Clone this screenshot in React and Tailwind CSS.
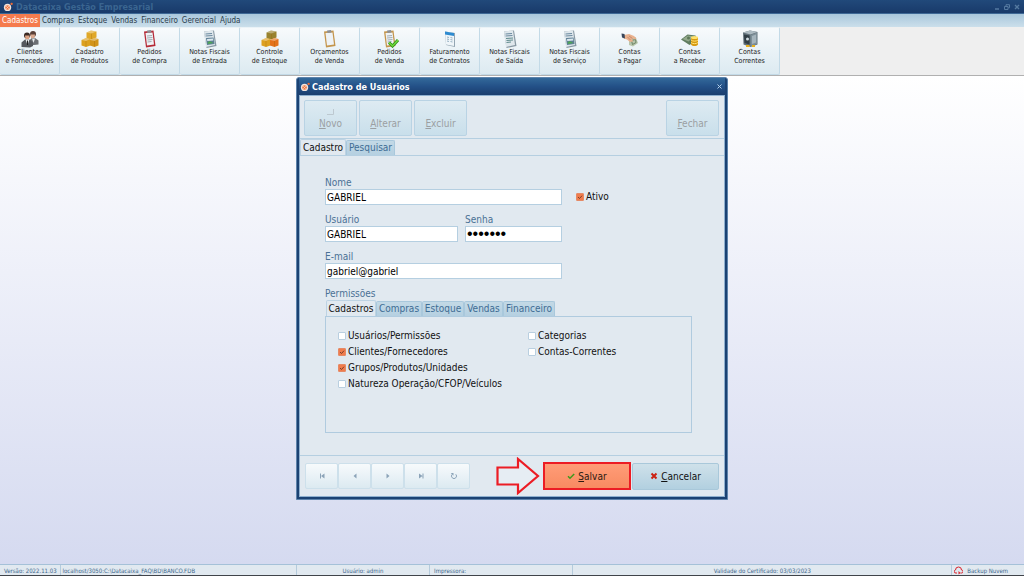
import React, { useState } from 'react';

const menus = ['Cadastros', 'Compras', 'Estoque', 'Vendas', 'Financeiro', 'Gerencial', 'Ajuda'];

const AppLogo = () => (
  <svg className="h-[10px] w-[10px] shrink-0" viewBox="0 0 22 22" aria-hidden="true">
    <circle cx="10" cy="12" r="8" fill="#f3e4dc" />
    <circle cx="10" cy="12" r="5" fill="#ee7541" />
    <path d="M7 9l6 6M13 9l-6 6" stroke="#fbd9c7" strokeWidth="1.6" />
    <circle cx="19" cy="4" r="2.6" fill="#ee6a35" />
  </svg>
);

const PeopleIcon = () => (
  <>
    <circle cx="24" cy="8" r="6" fill="#5a4038" />
    <path d="M19 9h9l-1 8h-7z" fill="#d9a98f" />
    <path d="M16 31V21l6-5h6l7 5v8z" fill="#6b6e73" />
    <path d="M22 17l3 9 3-9z" fill="#e6e9ec" />
    <circle cx="12" cy="11" r="6" fill="#3b2a24" />
    <path d="M8 11h9l-1 8H9z" fill="#dca283" />
    <path d="M1 34v-9l7-6h9l7 6v7l-6 3z" fill="#55585e" />
    <path d="M9 19l4 11 4-11z" fill="#eef1f4" />
    <path d="M13 21v9" stroke="#222" strokeWidth="2" />
  </>
);

const Boxes = ({ top, left, right }) => (
  <>
    <path d="M11 5l9-4 11 2v12l-10 4-10-2z" fill={top} />
    <path d="M11 5l9-4 11 2-10 4z" fill="#fff" fillOpacity=".35" />
    <path d="M1 20l9-4 9 2v13l-9 3-9-3z" fill={left} />
    <path d="M1 20l9-4 9 2-9 4z" fill="#fff" fillOpacity=".35" />
    <path d="M18 20l9-4 8 2v13l-8 3-9-3z" fill={right} />
    <path d="M18 20l9-4 8 2-8 4z" fill="#fff" fillOpacity=".35" />
    <path d="M21 7v11M10 22v11M27 22v11" stroke="#9a5e08" strokeOpacity=".6" />
  </>
);

const Clipboard = ({ color, lines, check }) => (
  <>
    <path d="M6 3l19-2 4 31-19 3z" fill={color} />
    <path d="M9 6l14-1 3 24-14 2z" fill="#eef2f5" />
    <path d="M12 1l8-1 1 5-8 1z" fill="#8b8f94" />
    {lines && <path d="M12 12l10-1M12 16l11-1M13 20l10-1M13 24l8-1" stroke="#8e9aa5" strokeWidth="1.6" />}
    {check && <path d="M16 25l7 7 11-12" fill="none" stroke="#2f8f18" strokeWidth="6" />}
    {check && <path d="M16 25l7 7 11-12" fill="none" stroke="#6fd83c" strokeWidth="3" />}
  </>
);

const Invoice = ({ picture }) => (
  <>
    <path d="M6 3l20-2 5 31-20 4z" fill="#8798a3" />
    <path d="M6 3l18-2 4 29-18 4z" fill="#dfe7ec" />
    <path d="M9 8l13-1M9 12l14-1" stroke="#6b8aa0" strokeWidth="2" />
    {picture ? (
      <>
        <path d="M10 16l15-1 2 13-15 2z" fill="#5d7f95" />
        <path d="M12 18l12-1 .5 4-12 1z" fill="#dbe8ef" />
        <path d="M13 25l4-3 8 4-11 2z" fill="#4fa458" />
      </>
    ) : (
      <path d="M10 17l14-1M11 21l13-1M11 25l9-1" stroke="#5e8a8d" strokeWidth="2" />
    )}
  </>
);

const ContractIcon = () => (
  <>
    <path d="M8 3l20 3v28L10 30z" fill="#93a5b2" />
    <path d="M8 3l18 3v26L10 29z" fill="#eff5f9" />
    <path d="M8 3l18 3v6L8 9z" fill="#2e8bd0" />
    <path d="M12 14l4 1M12 18l4 1M12 22l4 1M19 15l4 1M19 19l4 1M19 23l4 1" stroke="#98b2c4" strokeWidth="2" />
  </>
);

const PayIcon = () => (
  <>
    <path d="M16 18l13-4 5 12-10 7-8-3z" fill="#b8c6ac" />
    <path d="M21 21l8-2 1 6-7 4z" fill="none" stroke="#6e8467" strokeWidth="2" />
    <path d="M6 10l10-2 10 4 5 5-3 2-6-3 2 7-6 1-6-5-7-2z" fill="#e9b18e" />
    <path d="M1 7l6 1 1 9-6-2z" fill="#38465a" />
    <path d="M16 12l7 5M13 14l6 6" stroke="#a9674b" />
  </>
);

const ReceiveIcon = () => (
  <>
    <path d="M0 19L13 9l16 2 3 9-15 10z" fill="#5f7c5f" />
    <path d="M3 18l11-7 12 2-11 10z" fill="#93a98c" />
    <circle cx="15" cy="16" r="3" fill="#5d7957" />
    <path d="M20 15v14c3 4 11 4 14 0V15z" fill="#d79a10" />
    <ellipse cx="27" cy="15" rx="7" ry="3" fill="#ffe16a" />
    <path d="M20 20c3 3 11 3 14 0M20 25c3 3 11 3 14 0" stroke="#ffe37c" strokeWidth="2" fill="none" />
  </>
);

const SafeIcon = () => (
  <>
    <path d="M4 5l14-4 15 3v25l-14 5L5 29z" fill="#617079" />
    <path d="M4 5l14-4 15 3-14 5z" fill="#aebbc2" />
    <path d="M6 9l11 2v18L7 26z" fill="#313e46" />
    <path d="M19 10l13-5v23l-13 5z" fill="#7e8f98" />
    <path d="M22 12l8-3v16l-8 3z" fill="#a5b4bc" />
    <circle cx="13" cy="18" r="3" fill="#cfdbe1" />
    <path d="M10 30h7v4h-7zM22 30h6v4h-6z" fill="#e9b01c" />
  </>
);

const shortcuts = [
  { lines: ['Clientes', 'e Fornecedores'], icon: <PeopleIcon /> },
  { lines: ['Cadastro', 'de Produtos'], icon: <Boxes top="#e0a828" left="#dca11f" right="#d2941a" /> },
  { lines: ['Pedidos', 'de Compra'], icon: <Clipboard color="#b52b38" lines /> },
  { lines: ['Notas Fiscais', 'de Entrada'], icon: <Invoice picture /> },
  { lines: ['Controle', 'de Estoque'], icon: <Boxes top="#98822f" left="#dda021" right="#e4731c" /> },
  { lines: ['Orçamentos', 'de Venda'], icon: <Clipboard color="#c4954c" /> },
  { lines: ['Pedidos', 'de Venda'], icon: <Clipboard color="#c4954c" lines check /> },
  { lines: ['Faturamento', 'de Contratos'], icon: <ContractIcon /> },
  { lines: ['Notas Fiscais', 'de Saída'], icon: <Invoice /> },
  { lines: ['Notas Fiscais', 'de Serviço'], icon: <Invoice picture /> },
  { lines: ['Contas', 'a Pagar'], icon: <PayIcon /> },
  { lines: ['Contas', 'a Receber'], icon: <ReceiveIcon /> },
  { lines: ['Contas', 'Correntes'], icon: <SafeIcon /> },
];

const ActionButton = ({ children }) => (
  <button
    type="button"
    disabled
    className="flex h-9 w-[53px] items-end justify-center rounded-[2px] border border-[#b9d3e4] bg-linear-to-b from-[#deebf2] to-[#c9dfeb] pb-[4px] text-[10px] leading-[14px] text-[#9b9fa2]"
  >
    <span className="relative">{children}</span>
  </button>
);

const TextField = ({ id, label, type = 'text', value, className = '' }) => (
  <div className={`flex flex-col ${className}`}>
    <label htmlFor={id} className="h-[13px] text-[10px] leading-[13px] text-[#4a7195]">{label}</label>
    <input
      id={id}
      type={type}
      defaultValue={value}
      className={`h-4 w-full border border-[#b5cfe1] bg-white px-px leading-[14px] text-black outline-none ${
        type === 'password' ? "font-['Liberation_Sans',sans-serif] text-[16px]" : 'text-[10px]'
      }`}
    />
  </div>
);

const CheckField = ({ label, checked = false }) => (
  <label className="flex h-4 items-center gap-[2px] text-[10px] leading-4 text-[#111]">
    <span className="relative flex h-2 w-2 shrink-0">
      <input
        type="checkbox"
        defaultChecked={checked}
        className="peer h-2 w-2 appearance-none rounded-[1px] border border-[#b9cfe0] bg-white checked:border-[#e58a66] checked:bg-[#f07c4d]"
      />
      <svg className="pointer-events-none absolute inset-0 hidden h-2 w-2 peer-checked:block" viewBox="0 0 8 8">
        <path d="M2 4l1.5 1.5L6 2.7" fill="none" stroke="#6b3a28" strokeWidth=".9" />
      </svg>
    </span>
    {label}
  </label>
);

const permissionTabs = [
  { label: 'Cadastros', width: 'w-[50px]' },
  { label: 'Compras', width: 'w-[46px]' },
  { label: 'Estoque', width: 'w-[42px]' },
  { label: 'Vendas', width: 'w-[39px]' },
  { label: 'Financeiro', width: 'w-[52px]' },
];

const Tab = ({ active, onClick, width, children }) => (
  <button
    type="button"
    role="tab"
    aria-selected={active}
    onClick={onClick}
    className={`flex shrink-0 items-center justify-center whitespace-nowrap rounded-t-[2px] border text-[10px] leading-[14px] ${width} ${
      active
        ? '-mb-px h-[17px] border-[#bdd3e3] border-b-[#e1e9f0] bg-[#e1e9f0] text-[#111]'
        : 'h-[15px] border-[#a9c8dc] border-b-0 bg-linear-to-b from-[#c3d9e6] to-[#b5d0e1] text-[#3f6d94]'
    }`}
  >
    {children}
  </button>
);

const navShapes = [
  { name: 'Primeiro', shape: <path d="M2 1.5h1v5H2zM6.5 1.5v5L3 4z" /> },
  { name: 'Anterior', shape: <path d="M5.5 1.5v5L2.500 4z" /> },
  { name: 'Próximo', shape: <path d="M2.5 1.5v5L5.500 4z" /> },
  { name: 'Último', shape: <path d="M5.5 1.5h1v5h-1zM2 1.5v5L5.500 4z" /> },
  {
    name: 'Atualizar',
    shape: (
      <>
        <path d="M2.2 2.3A2.500 2.500 0 1 0 5.800 2.300" fill="none" stroke="#8ba3b8" />
        <path d="M.8 1h2.700v2.700z" />
      </>
    ),
  },
];

const UserDialog = () => {
  const [mainTab, setMainTab] = useState('Cadastro');
  const [permTab, setPermTab] = useState('Cadastros');

  return (
    <section
      role="dialog"
      aria-label="Cadastro de Usuários"
      className="flex w-[432px] max-w-full flex-col rounded-t-[3px] border border-[#5d83ab] bg-[#1b4273] px-[2px] pb-[2px]"
    >
      <header className="flex h-[17px] items-center gap-[2px] bg-linear-to-b from-[#33699a] via-[#235087] to-[#1b3e6e] pl-px pr-[2px]">
        <AppLogo />
        <h2 className="flex-1 text-[9px] font-bold leading-3 text-white">Cadastro de Usuários</h2>
        <button type="button" aria-label="Fechar janela" className="flex">
          <svg className="h-[7px] w-[7px]" viewBox="0 0 7 7">
            <path d="M1.500 1.500l4 4M5.500 1.500l-4 4" stroke="#b5d0e8" />
          </svg>
        </button>
      </header>

      <div className="flex flex-col border border-[#8fb0cf] bg-[#e1e9f0]">
        <div className="flex gap-[2px] border-b border-[#b5cfe1] px-1 pb-[2px] pt-1">
          <ActionButton>
            <svg className="absolute -top-2 left-2 h-[6px] w-[7px]" viewBox="0 0 7 6">
              <path d="M0 5.500h6.500V0" fill="none" stroke="#bdc8d0" />
            </svg>
            <u>N</u>ovo
          </ActionButton>
          <ActionButton><u>A</u>lterar</ActionButton>
          <ActionButton><u>E</u>xcluir</ActionButton>
          <div className="ml-auto mr-px">
            <ActionButton><u>F</u>echar</ActionButton>
          </div>
        </div>

        <div role="tablist" className="flex h-[16px] items-end">
          <Tab active={mainTab === 'Cadastro'} onClick={() => setMainTab('Cadastro')} width="w-[46px]">Cadastro</Tab>
          <Tab active={mainTab === 'Pesquisar'} onClick={() => setMainTab('Pesquisar')} width="w-[49px]">Pesquisar</Tab>
        </div>

        <form className="flex flex-col border-y border-[#b5cfe1] pb-[22px] pl-[25px] pr-8 pt-5" onSubmit={(e) => e.preventDefault()}>
          <div className="flex items-end gap-[14px]">
            <TextField id="nome" label="Nome" value="GABRIEL" className="w-[237px]" />
            <CheckField label="Ativo" checked />
          </div>
          <div className="mt-2 flex gap-[7px]">
            <TextField id="usuario" label="Usuário" value="GABRIEL" className="w-[133px]" />
            <TextField id="senha" label="Senha" type="password" value="gabriel" className="w-[97px]" />
          </div>
          <TextField id="email" label="E-mail" value="gabriel@gabriel" className="mt-2 w-[237px]" />

          <h3 className="mt-2 h-[13px] text-[10px] leading-[13px] text-[#4a7195]">Permissões</h3>
          <div role="tablist" className="flex h-4 items-end pl-px">
            {permissionTabs.map((t) => (
              <Tab key={t.label} active={permTab === t.label} onClick={() => setPermTab(t.label)} width={t.width}>
                {t.label}
              </Tab>
            ))}
          </div>
          <div className="grid h-[117px] grid-cols-[190px_1fr] content-start border border-[#b0cbdf] pl-3 pt-[11px]">
            <div className="flex flex-col">
              <CheckField label="Usuários/Permissões" />
              <CheckField label="Clientes/Fornecedores" checked />
              <CheckField label="Grupos/Produtos/Unidades" checked />
              <CheckField label="Natureza Operação/CFOP/Veículos" />
            </div>
            <div className="flex flex-col">
              <CheckField label="Categorias" />
              <CheckField label="Contas-Correntes" />
            </div>
          </div>
        </form>

        <footer className="flex h-10 items-center px-[5px]">
          <div className="flex">
            {navShapes.map(({ name, shape }) => (
              <button
                key={name}
                type="button"
                aria-label={name}
                className="flex h-[26px] w-[33px] items-center justify-center rounded-[2px] border border-[#cde0eb] bg-linear-to-b from-[#f7fafc] to-[#dceaf1]"
              >
                <svg className="h-2 w-2" viewBox="0 0 8 8" fill="#8ba3b8">{shape}</svg>
              </button>
            ))}
          </div>
          <svg className="ml-auto h-[38px] w-11 shrink-0" viewBox="0 0 44 38" aria-hidden="true">
            <path d="M1.500 10.500H22V2l20 17-20 17v-8.500H1.500z" fill="#e6edf3" stroke="#ec1c24" strokeWidth="2.200" />
          </svg>
          <button
            type="button"
            className="ml-[3px] flex h-7 w-[88px] items-center justify-center gap-[3px] border-2 border-[#ec1c24] bg-linear-to-b from-[#ff9c77] to-[#f88b62] text-[10px] text-[#2b1a12]"
          >
            <svg className="h-2 w-2" viewBox="0 0 8 8">
              <path d="M1 4.200l2 2L7.200 2" fill="none" stroke="#3f9a1d" strokeWidth="1.500" />
            </svg>
            <span><u>S</u>alvar</span>
          </button>
          <button
            type="button"
            className="ml-px flex h-[27px] w-[87px] items-center justify-center gap-[3px] rounded-[2px] border border-[#a9c8da] bg-linear-to-b from-[#cfe1ea] to-[#b2d0e0] text-[10px] text-[#111]"
          >
            <svg className="h-2 w-2" viewBox="0 0 8 8">
              <path d="M1.500 1.500l5 5M6.500 1.500l-5 5" stroke="#cc2112" strokeWidth="2" />
            </svg>
            <span><u>C</u>ancelar</span>
          </button>
        </footer>
      </div>
    </section>
  );
};

export default function App() {
  return (
    <div className="flex min-h-screen flex-col bg-white font-['DejaVu_Sans_Condensed','DejaVu_Sans',sans-serif]">
      <header className="flex h-[14px] items-center gap-[3px] border-b border-[#3d6896] bg-linear-to-b from-[#21497a] to-[#193a6a] pl-[3px] pr-1">
        <AppLogo />
        <h1 className="flex-1 text-[9px] font-bold leading-3 text-[#3a6590]">Datacaixa Gestão Empresarial</h1>
        <div className="flex gap-1 text-[#5479a0]">
          <button type="button" aria-label="Minimizar" className="flex">
            <svg className="h-[6px] w-[6px]" viewBox="0 0 6 6"><path d="M1 5h4" stroke="currentColor" strokeWidth="1.500" /></svg>
          </button>
          <button type="button" aria-label="Restaurar" className="flex">
            <svg className="h-[6px] w-[6px]" viewBox="0 0 6 6">
              <path d="M2 2V.7h3.500v3H4.300M.5 2.500h3.500v3H.5z" fill="none" stroke="currentColor" />
            </svg>
          </button>
          <button type="button" aria-label="Fechar" className="flex">
            <svg className="h-[6px] w-[6px]" viewBox="0 0 6 6"><path d="M1 1l4 4M5 1L1 5" stroke="currentColor" strokeWidth="1.300" /></svg>
          </button>
        </div>
      </header>

      <nav className="flex h-[13px] bg-linear-to-b from-[#a9c7dc] to-[#cbdfeb]">
        {menus.map((m) => (
          <button
            key={m}
            type="button"
            className="px-[2px] text-[8px] leading-[13px] text-[#2a3b4b] first:bg-[#f57b4e] first:text-white"
          >
            {m}
          </button>
        ))}
      </nav>

      <div className="flex h-[49px] border-b border-[#b0b0b0] bg-[#efefef]">
        {shortcuts.map(({ lines, icon }) => (
          <button
            key={lines.join(' ')}
            type="button"
            className="flex h-12 w-[60px] shrink-0 flex-col items-center whitespace-nowrap rounded-[2px] border border-l-0 border-[#c3dae7] border-t-[#eaf2f7] bg-linear-to-b from-[#f7fafc] to-[#dceaf1] pt-[2px] text-[7px] leading-[9px] text-[#222]"
          >
            <svg className="h-[18px] w-[18px] shrink-0" viewBox="0 0 36 36" aria-hidden="true">{icon}</svg>
            <span>{lines[0]}</span>
            <span>{lines[1]}</span>
          </button>
        ))}
      </div>

      <main className="flex flex-1 items-start justify-center bg-linear-to-b from-white to-[#d5daf0] pt-px">
        <UserDialog />
      </main>

      <footer className="flex h-3 border-b border-t border-b-[#40444a] border-t-[#a5c1d8] bg-[#e1e9f0] text-[6px] leading-[11px] text-[#3d678c]">
        <span className="w-[6%] whitespace-nowrap border-r border-[#b5cbdc] pl-1">Versão: 2022.11.03</span>
        <span className="w-[23%] whitespace-nowrap border-r border-[#b5cbdc] pl-px">localhost/3050:C:\Datacaixa_FAQ\BD\BANCO.FDB</span>
        <span className="w-[13%] border-r border-[#b5cbdc] text-center">Usuário: admin</span>
        <span className="w-[14%] border-r border-[#b5cbdc] pl-1">Impressora:</span>
        <span className="flex-1 border-r border-[#b5cbdc] text-center">Validade do Certificado: 03/03/2023</span>
        <span className="flex w-[7%] items-center gap-1 whitespace-nowrap pl-[2px]">
          <svg className="h-[9px] w-[9px]" viewBox="0 0 18 18" aria-hidden="true">
            <path d="M6 14H4a3 3 0 0 1-1-6 6 6 0 0 1 12 0 3 3 0 0 1 0 6h-2" fill="none" stroke="#d9222a" strokeWidth="2" />
            <path d="M9 10l4 4-4 3z" fill="#d9222a" />
          </svg>
          Backup Nuvem
        </span>
      </footer>
    </div>
  );
}
